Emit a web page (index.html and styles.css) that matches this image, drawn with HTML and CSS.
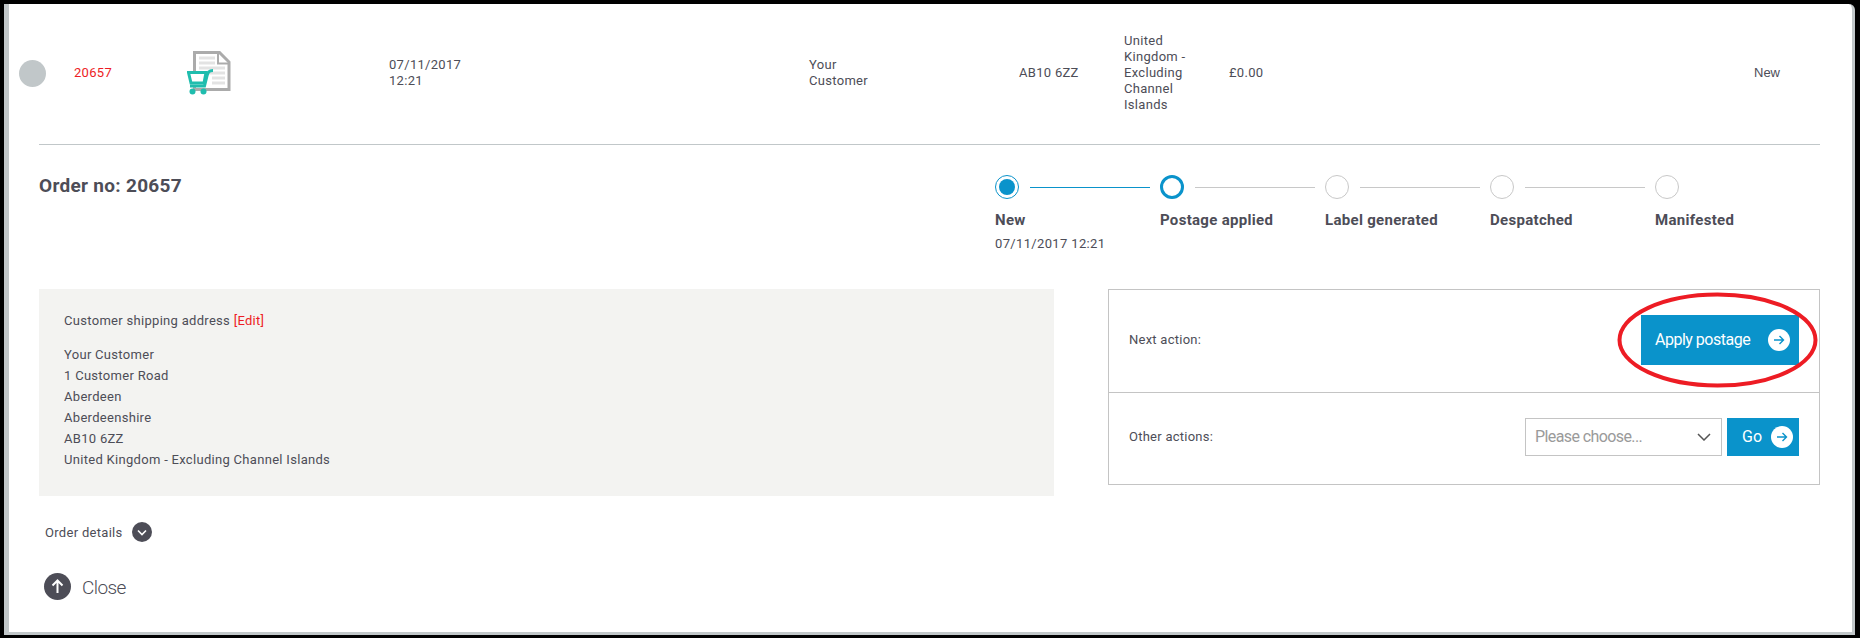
FILE: index.html
```html
<!DOCTYPE html>
<html lang="en">
<head>
<meta charset="utf-8">
<title>Order 20657</title>
<link rel="stylesheet" href="styles.css">
</head>
<body>
<main class="frame">
  <section class="order-row">
    <span class="status-dot"></span>
    <a class="order-id">20657</a>
    <svg class="order-icon" viewBox="0 0 44 44" width="44" height="44">
      <path d="M7.5 1.5H32.5L42 11V38.5H7.5Z" fill="#fff" stroke="#ababab" stroke-width="3"/>
      <path d="M31 3V12.500H41" fill="#fff" stroke="#ababab" stroke-width="2"/>
      <path d="M12 7H28M12 12H28M12 17H38M12 22H38M25 27H38M25 32H38" stroke="#e3e3e3" stroke-width="3"/>
      <path d="M0 20H20V35H3Z" fill="#fff"/>
      <path d="M1.500 21.500H19L17 32H4Z" fill="#fff" stroke="#1fbdae" stroke-width="3"/>
      <path d="M26 19.500C22 19.500 21 21 20 25L17.500 35H3" fill="none" stroke="#1fbdae" stroke-width="3"/>
      <circle cx="5.500" cy="40.500" r="3" fill="#1fbdae"/>
      <circle cx="16.500" cy="40.500" r="3" fill="#1fbdae"/>
    </svg>
    <span class="cell">07/11/2017<br>12:21</span>
    <span class="cell">Your<br>Customer</span>
    <span class="cell">AB10 6ZZ</span>
    <span class="cell">United<br>Kingdom -<br>Excluding<br>Channel<br>Islands</span>
    <span class="cell">£0.00</span>
    <span class="cell cell-status">New</span>
  </section>

  <section class="detail">
    <header class="detail-head">
      <h1 class="order-title">Order no: 20657</h1>
      <ol class="stepper">
        <li class="step">
          <div class="step-track"><span class="node node-current"><span class="node-fill"></span></span><span class="line line-done"></span></div>
          <div class="step-label">New</div>
          <div class="step-date">07/11/2017 12:21</div>
        </li>
        <li class="step">
          <div class="step-track"><span class="node node-next"></span><span class="line"></span></div>
          <div class="step-label">Postage applied</div>
        </li>
        <li class="step">
          <div class="step-track"><span class="node"></span><span class="line"></span></div>
          <div class="step-label">Label generated</div>
        </li>
        <li class="step">
          <div class="step-track"><span class="node"></span><span class="line"></span></div>
          <div class="step-label">Despatched</div>
        </li>
        <li class="step">
          <div class="step-track"><span class="node"></span></div>
          <div class="step-label">Manifested</div>
        </li>
      </ol>
    </header>

    <div class="panels">
      <div class="address">
        <p class="address-title">Customer shipping address <a class="edit">[Edit]</a></p>
        <p class="address-lines">Your Customer<br>1 Customer Road<br>Aberdeen<br>Aberdeenshire<br>AB10 6ZZ<br>United Kingdom - Excluding Channel Islands</p>
      </div>
      <div class="actions">
        <div class="action-row action-next">
          <span>Next action:</span>
          <button class="btn btn-apply">Apply postage
            <svg class="btn-icon" viewBox="0 0 22 22" width="22" height="22"><circle cx="11" cy="11" r="11" fill="#fff"/><path d="M6 11H15.500M11.500 7L15.500 11L11.500 15" fill="none" stroke="#0a93cb" stroke-width="1.400"/></svg>
          </button>
          <svg class="ring" viewBox="0 0 201 96" width="201" height="96"><ellipse cx="100.500" cy="48" rx="98" ry="45.500" fill="none" stroke="#ed1c24" stroke-width="4"/></svg>
        </div>
        <div class="action-row action-other">
          <span>Other actions:</span>
          <div class="action-controls">
            <div class="select">Please choose...
              <svg viewBox="0 0 14 8" width="14" height="8"><path d="M1 1L7 7L13 1" fill="none" stroke="#555" stroke-width="1.500"/></svg>
            </div>
            <button class="btn btn-go">Go
              <svg class="btn-icon" viewBox="0 0 22 22" width="22" height="22"><circle cx="11" cy="11" r="11" fill="#fff"/><path d="M6 11H15.500M11.500 7L15.500 11L11.500 15" fill="none" stroke="#0a93cb" stroke-width="1.400"/></svg>
            </button>
          </div>
        </div>
      </div>
    </div>

    <div class="order-details">Order details
      <svg viewBox="0 0 20 20" width="20" height="20"><circle cx="10" cy="10" r="10" fill="#4d4d57"/><path d="M6 8.500L10 12.500L14 8.500" fill="none" stroke="#fff" stroke-width="1.600"/></svg>
    </div>
    <div class="close">
      <svg viewBox="0 0 27 27" width="27" height="27"><circle cx="13.500" cy="13.500" r="13.500" fill="#4d4d57"/><path d="M13.500 20V8M8.500 12.500L13.500 7.500L18.500 12.500" fill="none" stroke="#fff" stroke-width="2"/></svg>
      <span class="close-label">Close</span>
    </div>
  </section>
</main>
</body>
</html>
```
FILE: styles.css
```css
* { box-sizing: border-box; }
html, body { margin: 0; height: 100%; }
body {
  background: #000;
  padding: 4px 5px 3px 4px;
  font-family: Roboto, "Liberation Sans", sans-serif;
  font-size: 13px;
  color: #4d4d57;
}
.frame {
  height: 631px;
  background: #fff;
  border-left: 5px solid #c1c7c9;
  border-right: 3px solid #c1c7c9;
  border-bottom: 3px solid #c1c7c9;
  border-top-right-radius: 6px;
}
.order-row {
  height: 140px;
  padding: 0 0 2px 10px;
  display: grid;
  grid-template-columns: 55px 113px 202px 420px 210px 105px 105px 525px 1fr;
  align-items: center;
  line-height: 16px;
  letter-spacing: 0.3px;
}
.status-dot { width: 27px; height: 27px; border-radius: 50%; background: #c1c7c9; }
.order-id { color: #ed1c24; }
.cell-status { font-family: "Liberation Sans", sans-serif; letter-spacing: 0; }
.detail { padding: 0 32px 0 30px; }
.detail-head {
  height: 145px;
  border-top: 1px solid #c1c7c9;
  display: flex;
  justify-content: space-between;
}
.order-title { margin: 29px 0 0; font-size: 19px; line-height: 24px; font-weight: 700; letter-spacing: 0.3px; }
.stepper {
  list-style: none;
  margin: 0;
  padding: 30px 0 0;
  width: 825px;
  display: flex;
}
.step { width: 165px; }
.step-track { display: flex; align-items: center; height: 24px; }
.node {
  flex: none;
  width: 24px;
  height: 24px;
  border-radius: 50%;
  border: 1px solid #c8c8c8;
  display: flex;
  align-items: center;
  justify-content: center;
}
.node-current { border-color: #0a93cb; }
.node-fill { width: 16px; height: 16px; border-radius: 50%; background: #0a93cb; }
.node-next { border: 3px solid #0a93cb; }
.line { width: 120px; height: 1px; margin-left: 11px; background: #c8c8c8; }
.line-done { background: #0a93cb; }
.step-label { margin-top: 12px; font-size: 15px; line-height: 18px; font-weight: 700; letter-spacing: 0.3px; }
.step-date { margin-top: 6px; line-height: 18px; letter-spacing: 0.35px; }
.panels { display: flex; justify-content: space-between; align-items: flex-start; }
.address {
  width: 1015px;
  height: 207px;
  padding: 22px 25px 0;
  background: #f3f3f1;
  letter-spacing: 0.3px;
}
.address p { margin: 0; }
.address-title { line-height: 20px; }
.edit { color: #ed1c24; }
.address .address-lines { margin-top: 13px; line-height: 21px; }
.actions { width: 712px; height: 196px; border: 1px solid #c4c4c4; }
.action-row {
  position: relative;
  display: flex;
  align-items: center;
  justify-content: space-between;
  padding: 0 20px;
  letter-spacing: 0.25px;
}
.action-next { height: 103px; padding-bottom: 3px; border-bottom: 1px solid #c4c4c4; }
.action-other { height: 91px; padding-bottom: 4px; }
.action-controls { display: flex; gap: 5px; }
.btn {
  border: 0;
  padding: 0;
  background: #0a93cb;
  color: #fff;
  font-family: inherit;
  font-size: 16px;
  display: flex;
  align-items: center;
  justify-content: space-between;
}
.btn-apply { width: 158px; height: 50px; padding: 0 9px 0 14px; letter-spacing: -0.5px; }
.btn-go { width: 72px; height: 38px; padding: 0 6px 0 15px; letter-spacing: 0; }
.ring { position: absolute; right: 1px; top: 2px; }
.select {
  width: 197px;
  height: 38px;
  padding: 0 10px 0 9px;
  border: 1px solid #c4c4c4;
  color: #9a9a9a;
  font-size: 16px;
  letter-spacing: -0.6px;
  display: flex;
  align-items: center;
  justify-content: space-between;
}
.order-details { margin: 26px 0 0 6px; height: 20px; display: flex; align-items: center; gap: 9px; letter-spacing: 0.3px; }
.close { margin: 31px 0 0 5px; height: 27px; display: flex; align-items: center; gap: 11px; font-size: 19px; font-weight: 300; letter-spacing: -0.6px; }
.close-label { padding-top: 2px; }
```
